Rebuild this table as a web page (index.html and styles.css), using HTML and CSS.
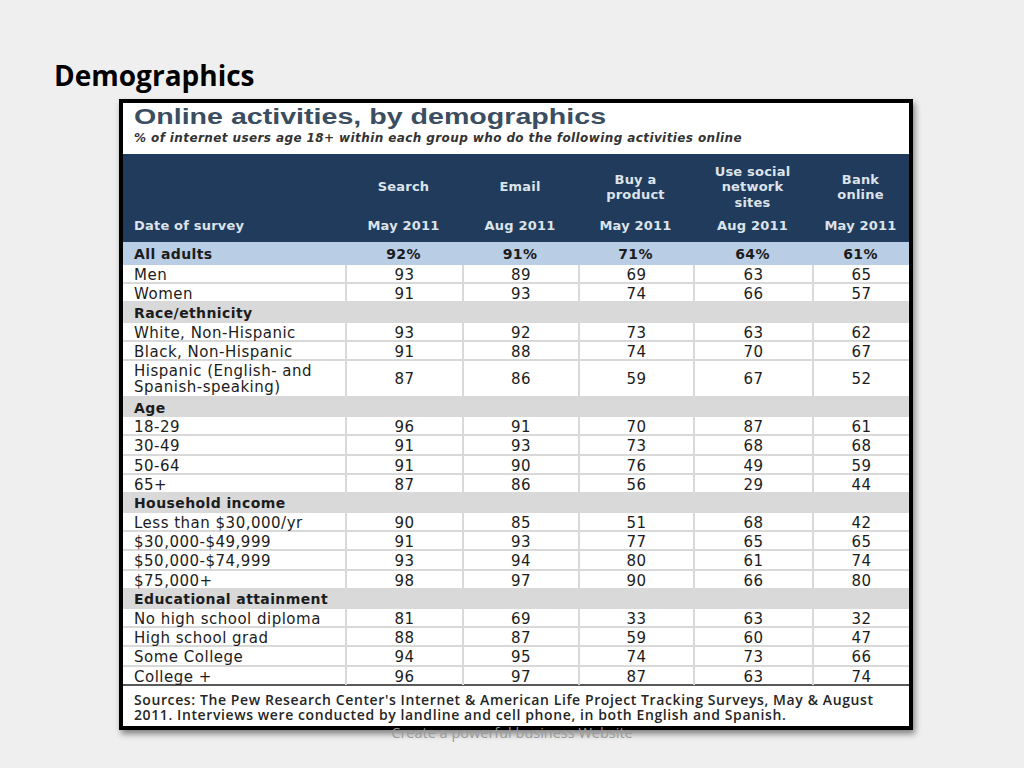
FILE: index.html
```html
<!DOCTYPE html>
<html lang="en">
<head>
<meta charset="utf-8">
<title>Demographics</title>
<link rel="stylesheet" href="styles.css">
</head>
<body>
<h1 class="slide-title">Demographics</h1>
<div class="figure">
  <div class="fig-head">
    <div class="fig-title">Online activities, by demographics</div>
    <div class="fig-sub">% of internet users age 18+ within each group who do the following activities online</div>
  </div>
  <div class="thead">
    <div class="hrow names">
      <div class="hcell label"></div>
      <div class="hcell">Search</div>
      <div class="hcell">Email</div>
      <div class="hcell">Buy a<br>product</div>
      <div class="hcell">Use social<br>network<br>sites</div>
      <div class="hcell">Bank<br>online</div>
    </div>
    <div class="hrow dates">
      <div class="hcell label">Date of survey</div>
      <div class="hcell">May 2011</div>
      <div class="hcell">Aug 2011</div>
      <div class="hcell">May 2011</div>
      <div class="hcell">Aug 2011</div>
      <div class="hcell">May 2011</div>
    </div>
  </div>
  <div class="tbody">
    <div class="row total"><div class="c label">All adults</div><div class="c">92%</div><div class="c">91%</div><div class="c">71%</div><div class="c">64%</div><div class="c">61%</div></div>
    <div class="row"><div class="c label">Men</div><div class="c">93</div><div class="c">89</div><div class="c">69</div><div class="c">63</div><div class="c">65</div></div>
    <div class="row"><div class="c label">Women</div><div class="c">91</div><div class="c">93</div><div class="c">74</div><div class="c">66</div><div class="c">57</div></div>
    <div class="row group"><div class="c label">Race/ethnicity</div></div>
    <div class="row"><div class="c label">White, Non-Hispanic</div><div class="c">93</div><div class="c">92</div><div class="c">73</div><div class="c">63</div><div class="c">62</div></div>
    <div class="row"><div class="c label">Black, Non-Hispanic</div><div class="c">91</div><div class="c">88</div><div class="c">74</div><div class="c">70</div><div class="c">67</div></div>
    <div class="row tall"><div class="c label">Hispanic (English- and<br>Spanish-speaking)</div><div class="c">87</div><div class="c">86</div><div class="c">59</div><div class="c">67</div><div class="c">52</div></div>
    <div class="row group"><div class="c label">Age</div></div>
    <div class="row"><div class="c label">18-29</div><div class="c">96</div><div class="c">91</div><div class="c">70</div><div class="c">87</div><div class="c">61</div></div>
    <div class="row"><div class="c label">30-49</div><div class="c">91</div><div class="c">93</div><div class="c">73</div><div class="c">68</div><div class="c">68</div></div>
    <div class="row"><div class="c label">50-64</div><div class="c">91</div><div class="c">90</div><div class="c">76</div><div class="c">49</div><div class="c">59</div></div>
    <div class="row"><div class="c label">65+</div><div class="c">87</div><div class="c">86</div><div class="c">56</div><div class="c">29</div><div class="c">44</div></div>
    <div class="row group"><div class="c label">Household income</div></div>
    <div class="row"><div class="c label">Less than $30,000/yr</div><div class="c">90</div><div class="c">85</div><div class="c">51</div><div class="c">68</div><div class="c">42</div></div>
    <div class="row"><div class="c label">$30,000-$49,999</div><div class="c">91</div><div class="c">93</div><div class="c">77</div><div class="c">65</div><div class="c">65</div></div>
    <div class="row"><div class="c label">$50,000-$74,999</div><div class="c">93</div><div class="c">94</div><div class="c">80</div><div class="c">61</div><div class="c">74</div></div>
    <div class="row"><div class="c label">$75,000+</div><div class="c">98</div><div class="c">97</div><div class="c">90</div><div class="c">66</div><div class="c">80</div></div>
    <div class="row group"><div class="c label">Educational attainment</div></div>
    <div class="row"><div class="c label">No high school diploma</div><div class="c">81</div><div class="c">69</div><div class="c">33</div><div class="c">63</div><div class="c">32</div></div>
    <div class="row"><div class="c label">High school grad</div><div class="c">88</div><div class="c">87</div><div class="c">59</div><div class="c">60</div><div class="c">47</div></div>
    <div class="row"><div class="c label">Some College</div><div class="c">94</div><div class="c">95</div><div class="c">74</div><div class="c">73</div><div class="c">66</div></div>
    <div class="row last"><div class="c label">College +</div><div class="c">96</div><div class="c">97</div><div class="c">87</div><div class="c">63</div><div class="c">74</div></div>
  </div>
  <div class="sources">Sources: The Pew Research Center's Internet &amp; American Life Project Tracking Surveys, May &amp; August<br>2011. Interviews were conducted by landline and cell phone, in both English and Spanish.</div>
</div>
<div class="watermark">Create a powerful business Website</div>
</body>
</html>
```
FILE: styles.css
```css
* { box-sizing: border-box; }
html, body { margin: 0; padding: 0; }
body {
  width: 1024px;
  height: 768px;
  background: #efefef;
  position: relative;
  overflow: hidden;
  font-family: "DejaVu Sans", Verdana, sans-serif;
}
.slide-title {
  margin: 0;
  padding: 56px 0 0 54px;
  font-family: "Open Sans", sans-serif;
  font-weight: 700;
  font-size: 28px;
  line-height: 38px;
  color: #000;
}
.figure {
  margin: 5px 0 0 119px;
  width: 794px;
  height: 631px;
  border: 4px solid #000;
  background: #fff;
  box-shadow: 2px 4px 6px rgba(0, 0, 0, 0.45);
  display: flex;
  flex-direction: column;
}
.fig-head {
  padding: 1px 0 8px 11px;
  height: 51px;
}
.fig-title {
  display: inline-block;
  font-family: "Liberation Sans", Arial, sans-serif;
  font-weight: 700;
  font-size: 22px;
  line-height: 26px;
  color: #3b4d61;
  transform: scaleX(1.3);
  transform-origin: left center;
  white-space: nowrap;
}
.fig-sub {
  margin-top: 1px;
  font-family: "DejaVu Sans", sans-serif;
  font-weight: 700;
  font-style: italic;
  font-size: 12px;
  line-height: 15px;
  letter-spacing: 0.4px;
  color: #333;
  white-space: nowrap;
}
.thead {
  background: #203b5c;
  color: #dde3ea;
  font-weight: 700;
  font-size: 13px;
  height: 88px;
}
.hrow, .row {
  display: grid;
  grid-template-columns: 222px 117px 116px 115px 119px 97px;
}
.hrow.names { height: 62px; padding-top: 4px; }
.hrow.dates { height: 26px; padding-bottom: 6px; }
.hcell {
  display: flex;
  align-items: center;
  justify-content: center;
  text-align: center;
  line-height: 15.5px;
  letter-spacing: 0.2px;
}
.hcell.label { justify-content: flex-start; padding-left: 11px; }
.tbody {
  font-size: 15px;
  color: #1c1c1c;
}
.row {
  height: 19.2px;
  border-bottom: 2px solid #d9d9d9;
}
.row.tall { height: 37px; }
.c {
  display: flex;
  align-items: center;
  justify-content: center;
  padding-top: 2px;
  letter-spacing: 0.5px;
  border-left: 2px solid #d9d9d9;
  line-height: 16px;
  white-space: nowrap;
}
.c.label {
  justify-content: flex-start;
  padding-left: 11px;
  border-left: none;
}
.row.total {
  height: 23px;
  background: #b9cde5;
  border-bottom: none;
  font-size: 14px;
  font-weight: 700;
}
.row.total .c { border-left: none; letter-spacing: 0.4px; padding-top: 1px; }
.row.group {
  background: #d9d9d9;
  font-size: 14px;
  font-weight: 700;
  display: flex;
}
.row.group .c { letter-spacing: 0.4px; }
.row.last { border-bottom: 2px solid #5a5a5a; }
.sources {
  padding: 6px 0 0 11px;
  font-family: "Open Sans", sans-serif;
  font-weight: 600;
  font-size: 14px;
  line-height: 15px;
  letter-spacing: 0.6px;
  color: #262626;
  white-space: nowrap;
}
.watermark {
  position: absolute;
  left: 0;
  right: 0;
  top: 724px;
  text-align: center;
  font-family: "Open Sans", sans-serif;
  font-size: 14.5px;
  line-height: 18px;
  color: #9a9a9a;
}
```
